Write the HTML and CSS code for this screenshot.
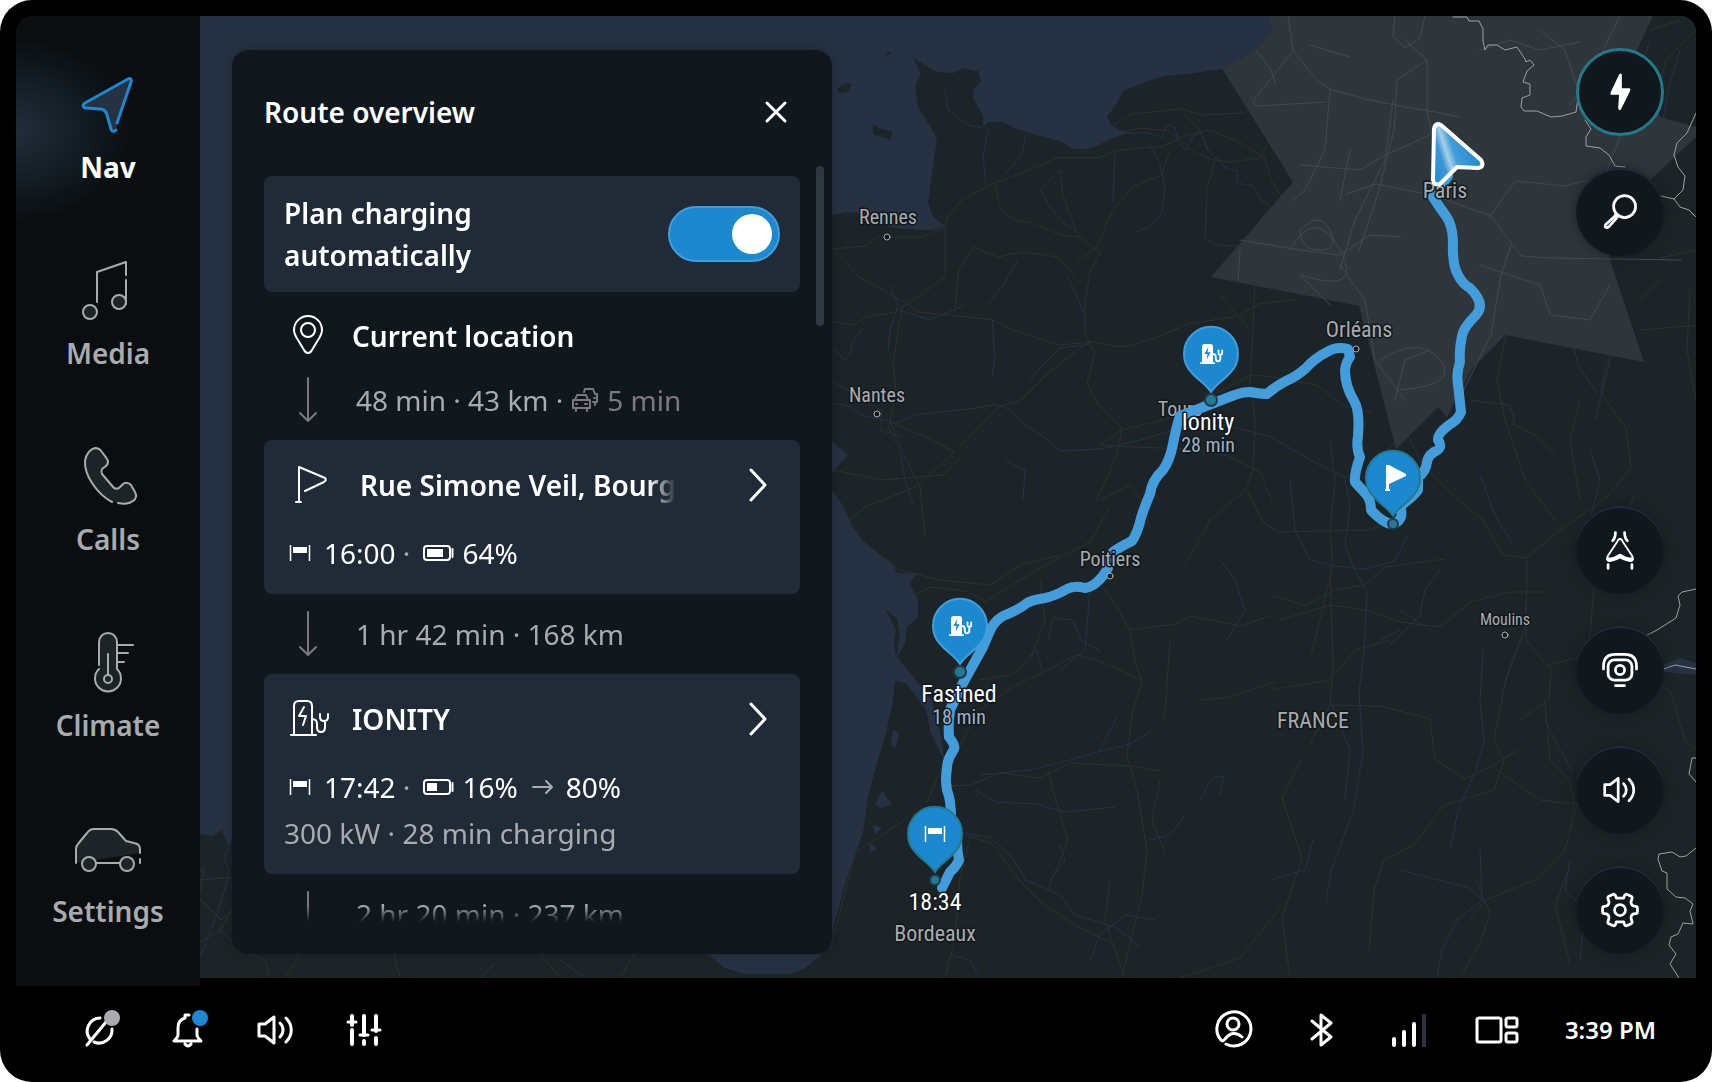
FILE: index.html
```html
<!DOCTYPE html>
<html lang="en">
<head>
  <meta charset="UTF-8" />
  <meta name="viewport" content="width=device-width, initial-scale=1.0"/>
  <title>Route overview</title>
  <link rel="stylesheet" href="styles.css">
</head>
<body>

  <!-- shared icons -->
  <svg class="sprite" aria-hidden="true">
    <symbol id="arrow-down" viewBox="0 0 48 48">
      <path d="M24 2v43M16 37l8 8 8-8"/>
    </symbol>
    <symbol id="finish" viewBox="0 0 36 32">
      <path d="M6.500 8v16M25.500 8v16" fill="none" stroke="#fff" stroke-width="1.500" stroke-linecap="butt"/>
      <path d="M9 10h14v6H9z" fill="#fff" stroke="none"/>
    </symbol>
    <symbol id="chevron" viewBox="0 0 40 40">
      <path d="M11 5l14 15-14 15"/>
    </symbol>
    <symbol id="volume" viewBox="0 0 40 40">
      <path d="M3 14h6l9-7v26l-9-7H3z"/>
      <path d="M24 13c4 4 4 10 0 14M30 8c7 7 7 17 0 24"/>
    </symbol>
    <symbol id="charger-solid" viewBox="0 0 28 24">
      <path d="M2 21V4q0-3 3-3h6q3 0 3 3v17h2v2H0v-2zM9 4L4.500 12H8l-1 6 4.500-8H8z" fill="#fff" fill-rule="evenodd" stroke="none"/>
      <path d="M14 12q3 0 3 3v2q0 3 2.500 3t2.500-3v-4M20 8v3q0 2 2 2t2-2V8" fill="none" stroke="#fff" stroke-width="2"/>
    </symbol>
  </svg>

  <div class="screen">
    <div class="main">

      <nav class="sidebar">
        <button class="nav-item active">
          <svg viewBox="0 0 64 64"><path d="M41 51L55 10c1-3-1-4-3-3L9 31c-3 2-2 5 1 5l14 1c4 0 6 2 7 6l4 14c1 3 3 3 5 1"/></svg>
          <span>Nav</span>
        </button>
        <button class="nav-item">
          <svg viewBox="0 0 64 64"><path class="line" d="M21 44V14L50 4v13M50 22v24"/><circle cx="14" cy="54" r="7"/><circle cx="43" cy="44" r="7"/></svg>
          <span>Media</span>
        </button>
        <button class="nav-item">
          <svg viewBox="0 0 64 64"><path d="M36 58C21 50 8 31 9 17c1-8 6-12 10-13 3 0 5 1 7 4l5 7c2 3 1 5-1 7l-4 3c-1 2-1 3 0 5l12 14c2 1 3 1 5 0l4-4c3-2 6-1 8 1l4 7c2 4 1 7-2 9-4 3-10 3-15 2"/></svg>
          <span>Calls</span>
        </button>
        <button class="nav-item">
          <svg viewBox="0 0 64 64"><path d="M23 35V12a9 9 0 0 1 18 0v27a13 13 0 1 1-18 0"/><circle cx="32" cy="49" r="4"/><path class="line" d="M32 45V24M41 15h16M41 23h11M41 32h7"/></svg>
          <span>Climate</span>
        </button>
        <button class="nav-item">
          <svg viewBox="0 0 64 64"><path d="M0 47V33q0-3 2-5l9-11q3-4 7-4h17q4 0 7 3l8 9 8 2q6 1 6 6v4"/><path class="line" d="M64 43v4M20 47h24"/><circle cx="13" cy="48" r="7"/><circle cx="51" cy="48" r="7"/></svg>
          <span>Settings</span>
        </button>
      </nav>

      <main class="map">
        <svg class="map-canvas" viewBox="200 16 1496 962" preserveAspectRatio="xMidYMid slice">
          <defs>
            <clipPath id="land-clip">
              <path id="land" d="M1270 16l1 17-15 17-34 19-35 5-24 2-23 8-17 7-6 12-10 14 5 9 15 7-14 5-16 8-10 3h-14l-13-8-27-7-16-5-14-7h-15l-5 5v-12l-10-17v-8l8-8-3-11-15-3-10 5-16-1-24-14 8 16-6 12 3 21 12 19 7 13-4 26-5 38 5 14 12 9-12 4-33-1-20-5-23-11-10-1-14 3L700 215V440L833 442 848 455 833 472 760 482 833 491 843 506 853 527l9 13 18 15 13 10 4 8h20l-7 10 8 17v17l-11 10-2 16-8 14 22 27 13 16 8 31 5 32-14-30-5-23-20-27-11-2-2 19-7 33-8 27-10 36-5 37-17 47L833 930 820 956 805 968 790 974H745L725 968 708 955 540 905 240 840 232 838 228 845 222 830 212 836 200 834V978H1696V16z"/>
            </clipPath>
            <linearGradient id="cursor-fill" x1="0" y1="1" x2="1" y2="0.600">
              <stop offset="0" stop-color="#1b88d0"/>
              <stop offset="0.300" stop-color="#3b97d8"/>
              <stop offset="0.420" stop-color="#a9cfe9"/>
              <stop offset="0.550" stop-color="#439ddb"/>
              <stop offset="1" stop-color="#1b88d0"/>
            </linearGradient>
          </defs>

          <rect class="sea" x="200" y="16" width="1496" height="962"/>
          <use href="#land" class="land"/>
          <path class="land" d="M873 125l8 4 12 2-3 9-17-6zM837 89l8-6 7 1-4 8-9 1zM885 54l6-3-2 4zM885 608l12 11 3 17-4 21-2-14 2-13z"/>
          <path class="sea" d="M893 730l6 3-3 15-5-3zM875 805l7-15 10 15-12 3zM873 825l9 3-7 7zM870 843l8 6-8 3zM1664 664l16-6 16 5v12l-32-3z"/>

          <!-- rivers -->
          <g class="river">
            <path d="M833 403l16 3 12 9 35 8 20-8 60-7 20-4 15 6 12 14 20 12 18 15 40-2 40-9 35-11 50-4 45 12 43 25 30 15 25-1 30-40"/>
            <path d="M945 90l3 20 20 15 15 3M988 130l-5 25 3 30M1025 137l-3 18-18 20M1060 170l-20 20 12 20 12 13 12 8"/>
            <path d="M1127 133h20l15 4 5-12 8 2 3 15 8 8 8-15 8-2 4 15 20 20 12 3-1 12 16 3 8 14 20 12-10 20 20 10"/>
            <path d="M1150 145l10 20 5 22-3 25-12 15-15 5M1115 152l-2 50M1018 260l-15 25-15 20M1068 277l8 18 10 22-2 10M992 318l3 40-3 20M1030 380l10-12 20-20 30-4"/>
            <path d="M833 348l12 12 5-6 3-12 8-12M890 285l8 20-8 25-2 20M900 310l30 10 35-15M890 430l10 20 5 30 8 25M1005 460l20 10-2 30"/>
            <path d="M1220 560l15 20 10 30-18 30M1090 590l-5 60-25 20M1048 640l5-22 20 2 8 20 20 12M1025 660l12-10 5 20"/>
            <path d="M980 775l50-5 40-10 20-6 40-10 20-12M975 790l20 12 40 2 30 8 50-5M955 832l35 5 20 18 10 15 5 10 35 15 15 20 40 12 25 20"/>
            <path d="M1100 750l10-20 8-15M1200 800l12-22 12-2-5 20M1150 840l20-5 15-20M1050 880l15-20-5-15M1090 960l10-25 25-20 30 5M950 955l20 5 10 18"/>
            <path d="M1345 480l5 25-5 40 10 25 12 22-3 60-5 40 4 60-10 60-8 20-14 40-5 30"/>
            <path d="M1290 480l5 50 15 30 25 6 30 3 30-8 12-25M1440 570l-15 20-5 25-30 30M1590 450l10 30-10 40M1480 475l15 40 18 30"/>
            <path d="M1450 850l8-40 18-40 8-30-4-40 3-50M1480 850l2 50-25 20-15 30-5 28M1525 605l3 20-15 35-12 35M1545 720l15 30 12 20"/>
            <path d="M1570 860l-5 30 20 20-5 50M1400 870l30 8 40 10 15 15M1330 700l20 50-5 50M1270 880l35-10 8-30M1650 40l-10 30 10 30M1680 50l-12 40-5 30"/>
            <path d="M232 838l-8 20 5 14-5 20-10 30-14 35M200 870l12 10M480 978l15-15M560 960l25 18"/>
            <path d="M1600 320l10 40-15 60M1545 300l25 30 8 35 20 30M1500 400l15 15-3 10M1380 640l20-10M1400 610l30 20"/>
          </g>

          <!-- roads -->
          <g class="road">
            <path d="M833 249l33-3 12-9h45l22-10 2-9 15-18 30-16 30-11 35-15h40l22-8 45-4 20-10 25-6 30 12 25 15 8 25 22 35 25 12M833 249l25 27 35 20 15 8 10 8 50 5 25 3 20 10 45 15 35-3 30 5 30-8 35-15 50-8 20-12 40-5"/>
            <path d="M945 227v50l-20 15-30 20-30 5-10 8-22-3M903 305l-5 25-5 35 3 25-8 40M1060 170l3 25 5 15 10 25 22 18-10 20-5 30v30l10 20-8 30 10 20 25 25-5 25-12 30-10 20"/>
            <path d="M1112 126l20-12 50-5 20 6 40-2 20-6M1120 133l20-5 30 3 22 20 18 8 20 3 30-4 10-20M1215 159l-8 30-2 50 12 6 40 2 60-2"/>
            <path d="M1170 150l-8 25-30 12-20 25-15 35-20 15M1185 115l15 15 8 20M995 185l6 25 15 10 15 3 30 12 20 2M832 381l50 30-1 20 20 5"/>
            <path d="M890 422l35 15 30 15-40 35-50 20-30 25M960 446l15-15 25-25 20-5 30-30 40-30M890 422l15 35 15 30 5 50M955 312l3-40 15-25 25 10 25-5 35 5 18 20"/>
            <path d="M1100 445l35 2 50 2 40 6 35 17 12 30M1100 445l22-15 60-15 30-20 40-20 20 2 45 8 25 20 30 8M1100 500l30-15 15 20 5 25"/>
            <path d="M1255 280l-2 50-3 50 5 40-2 50-8 20-35 30-25 45M1220 295l30 35M1330 440l5 40-5 50 3 35-12 50-10 40M1248 492l15 30 15 10 90-2 20-5 20-20 15-20"/>
            <path d="M833 470l50 10 60-5 20-20M860 540l40 30 40 10 50 5 30-20 40-10M915 595l15-8 40 5 15 10 40-25 45-25 20-10 20-35"/>
            <path d="M1100 582l20 30 10 18 45-6 15-8 50 10 30-10M1130 630l6 35 6 15-10 35-5 40 10 35 10 60-5 45-15 60-5 25"/>
            <path d="M1142 680l-45-20-20-5-40 20-25 12-35 25-20 40-15 15-15 35M950 786l20-1 30-12 40 5 30-15 60 3 30 5M980 680l30-5 20-15 15-40-5-40"/>
            <path d="M955 835l-40-22-60 40-15 60-10 35M968 836l25 8 25 35 25 25 30 20 40 20 10 30M1048 890l20-50-15-50-5-20M945 978l10-40 5-60 10-40"/>
            <path d="M1200 700l30-3 45-15M1160 780l-8 40 12 30M1170 640l-4 60-3 20M1110 880l-5 40 8 25M1270 690l60-10 25-30 35-10M1280 620l50-15 35 5 35 12 40 5 30-25 40-10h35"/>
            <path d="M1270 595l35 10 30-15 30-5 20-18 60-8M1330 565l3 100-3 40-20 40M1330 705l50 1 50 13 5 40 30 20 30-15 25-15M1490 765l50 35 45 5M1527 620l-20 55-8 40-5 25 10 20-10 30-50 15-30 40-30 15-10 30-5 60"/>
            <path d="M1527 560l-1 80 25 30-2 30-30 20M1549 665l30-8 10-10 5-60 20-50 20-40M1545 700l5 60 20 20 5 30-10 40-30 30-50 20-15 20M1526 558l30-25 50-35 25-30-5-40-25-35 5-30 20-20M1580 400l-10 40 10 60"/>
            <path d="M1393 405l30 60 30 30 30 25 20 35 25 3M1555 520l-30-40-20-60-8-40 10-50M1470 400l40 5 5 20 20 10 20 20M1640 330l60-5M1690 290l-3 60 9 50M1400 380l30-30 20-40"/>
            <path d="M1570 865l-15 40 15 60M1460 978l20-35 10-30-15-35M1620 700l5-40 20 20 25 10 15 50 11 10M1290 978l-8-60 20-60-20-60 20-40M1180 978l60-20 40-50"/>
            <path d="M200 880l35-3M204 868l-5 30 22 22 11-10-12 20-20 12M220 930l20 20 25 10 5 18M400 978l-10-40M620 978l15-25M300 955l-15 23M560 978l-20-25"/>
            <path d="M1650 30l30-10M1696 30l-30 30-10 40M1660 258l36-8M1640 300l20-20"/>
          </g>

          <!-- reachable area -->
          <g clip-path="url(#land-clip)">
            <path class="reach" d="M1189 16l104 166-82 95 148 29 37 143 42-42 9 10 24-47 34-35 139 27-35-105 41-77 46-43v-10l-36-10-23-67 16-34z"/>
            <g class="reach-road">
              <path d="M1288 16l5 35 25 30 12 8 35 10 40 8 30 5 25 5M1293 51l-20 25-20 25 3 5 70-4M1256 50l15 20 5 15M1310 45l40 12M1395 16l-2 20 12 12 15-10 5-22M1405 40l22 20v50l5 25M1427 60l-30 20-3 50-15 60-20 60"/>
              <path d="M1330 90l-5 60-20 40-12 10M1300 165l60 5 25-15 45-20M1393 100l-8 60-30 60-15 50M1436 196l55 20 30 40 30 2 130 2M1490 216l25-35 50 5 40-10 15-40M1436 196l-60-12-30 10M1511 245l-10 30-10 60-30 60"/>
              <path d="M1300 230q20-20 30 0t-10 20-20-20M1290 250q25-45 50 0t-40 25l30 30M1240 240l60 10 40 5 30-20 30 2M1240 250l-2 30M1340 265l25 35 10 60 30 40M1380 360q40-25 60 0t-40 30M1480 265l60 20 10 30 40 5 20-35M1540 30l25 20 20 60M1480 50l30-10 30 10 40-8M1620 16l-30 60-20 30M1350 150l-10 50M1430 350l-25 10-10 40"/>
            </g>
          </g>

          <!-- country borders -->
          <path class="border" d="M1453 17h14l2 4h10l4 8v12l2 9 3-5h9l8 5 12-3 8 12 1 3 4-2 4 5-7 6-4 11 7 2v11l-8 3-1 9 3 4h13l14 6 11-1 14-4 2-14M1585 120l6 9-5 8v9l14 2 9 7 6 11 10 1M1696 113l-9 20-10 10-3 12 4 12 7 9-2 14-9 9-13-3M1674 199l6 8 9 3 7 7M1696 589l-14 3-4 4 2 9-4 13-19 12-10 5M1664 669l11-4 21 4M1696 758h-4l-3 16 7 8M1696 848l-10 8-6 1-8-5-13 2-1 5 4 12 5 2v16l9 8 9 1 8 6-3 7 3 13-10-1-5 11-7 3-2 8 7 9-6 10 9 14"/>

          <!-- city labels -->
          <g class="city">
            <circle cx="887" cy="237" r="3"/><text x="888" y="224">Rennes</text>
            <circle cx="877" cy="414" r="3"/><text x="877" y="402">Nantes</text>
            <circle cx="1356" cy="349" r="3"/><text class="large" x="1359" y="337">Orléans</text>
            <text x="1180" y="416">Tours</text>
            <circle cx="1505" cy="635" r="3"/><text class="small" x="1505" y="625">Moulins</text>
            <text class="large" x="935" y="941">Bordeaux</text>
            <text class="large" x="1313" y="728">FRANCE</text>
          </g>

          <path class="route" d="M1448 176L1433 197Q1440 208 1446 216T1453 240Q1452 262 1457 273T1470 288Q1486 304 1476 315Q1463 328 1462 336Q1459 350 1460 362Q1456 374 1458 384L1461 412Q1458 420 1449 425Q1437 434 1438 440Q1444 448 1434 452Q1428 456 1427 462Q1426 472 1418 477L1418 490Q1412 498 1400 506 1405 520 1393 524 1384 524 1371 510 1371 500 1366 494L1355 482Q1354 474 1360 457 1356 448 1358 436 1360 410 1354 401 1345 386 1345 370 1346 362 1350 357L1348 349Q1336 346 1327 352 1315 358 1306 368 1296 377 1286 381 1276 386 1267 394 1262 394 1250 392 1242 392 1232 396L1201 408 1180 416Q1176 428 1173 444 1170 460 1163 470 1152 480 1150 494 1144 508 1141 518 1138 532 1132 541 1118 548 1113 552 1109 558 1108 568 1103 577 1097 582 1092 587 1085 588 1074 585 1067 589 1055 596 1045 598 1032 600 1027 603 1020 609 1003 616 993 622 989 633L983 647 963 683 950 710Q948 724 949 737 957 747 953 751 947 760 947 768 945 780 947 790 951 800 951 817L957 840Q957 850 959 860 956 867 950 872 946 880 942 888"/>

          <g class="city">
            <text class="large" x="1445" y="198">Paris</text>
            <circle cx="1110" cy="576" r="3"/><text x="1110" y="566">Poitiers</text>
          </g>

          <!-- charging stops and destinations -->
          <g class="pin light" transform="translate(1211 354)">
            <circle class="dot" cy="46" r="6"/>
            <path d="M0 38C-5 30-13 26-19 19A27 27 0 1 1 19 19C13 26 5 30 0 38z"/>
            <use href="#charger-solid" x="-11" y="-11" width="26" height="22"/>
          </g>
          <g class="pin light" transform="translate(960 626)">
            <circle class="dot" cy="46" r="6"/>
            <path d="M0 38C-5 30-13 26-19 19A27 27 0 1 1 19 19C13 26 5 30 0 38z"/>
            <use href="#charger-solid" x="-11" y="-11" width="26" height="22"/>
          </g>
          <g class="pin" transform="translate(1393 478)">
            <circle class="dot" cy="46" r="5"/>
            <path d="M0 38C-5 30-13 26-19 19A27 27 0 1 1 19 19C13 26 5 30 0 38z"/>
            <path class="glyph" d="M-7-13h3l17 9v2L-4 6v5h1v2h-5v-2h1z"/>
          </g>
          <g class="pin" transform="translate(935 834)">
            <circle class="dot" cy="46" r="5"/>
            <path d="M0 38C-5 30-13 26-19 19A27 27 0 1 1 19 19C13 26 5 30 0 38z"/>
            <use href="#finish" x="-16" y="-16" width="36" height="32"/>
          </g>

          <g class="stop">
            <text x="1208" y="430">Ionity</text><text class="time" x="1208" y="452">28 min</text>
            <text x="959" y="702">Fastned</text><text class="time" x="959" y="724">18 min</text>
            <text x="935" y="910">18:34</text>
          </g>

          <path class="cursor" d="M1434 129q1-7 7-4l40 35q4 7-3 8l-21-1-17 17q-6 2-7-4z"/>
        </svg>

        <section class="panel">
          <header class="panel-header">
            <h1>Route overview</h1>
            <button class="close" aria-label="Close">
              <svg viewBox="0 0 32 32"><path d="M7 7l18 18M25 7L7 25"/></svg>
            </button>
          </header>

          <div class="panel-body">
            <div class="stops">
              <div class="card auto-charge">
                <label for="auto-charge">Plan charging<br>automatically</label>
                <input type="checkbox" id="auto-charge" class="toggle" checked>
              </div>

              <div class="location">
                <svg class="stop-icon" viewBox="0 0 48 48"><path d="M24 41c-2 0-3-1-4-3l-6-10c-2-3-4-6-4-10a14 14 0 0 1 28 0c0 4-2 7-4 10l-6 10c-1 2-2 3-4 3z"/><circle cx="24" cy="18" r="7"/></svg>
                <h2>Current location</h2>
              </div>

              <div class="leg">
                <svg class="leg-icon"><use href="#arrow-down"/></svg>
                <p>48 min · 43 km ·
                  <svg class="traffic" viewBox="0 0 28 28"><path d="M4 14l2-5h9l2 5M2 14h17v8H2zM5 22v3M16 22v3M5 18h1M14 18h2M13 6l1-3h8l2 5h2v8h-4M24 16v3M23 12h1"/></svg>
                  <span class="delay">5 min</span></p>
              </div>

              <article class="card">
                <div class="card-title flag">
                  <svg class="stop-icon" viewBox="0 0 48 48"><path d="M15 41V6l26 11q2 2-1 4l-19 9M12 41h5"/></svg>
                  <h2 class="fade">Rue Simone Veil, Bourg</h2>
                  <button class="more" aria-label="Rue Simone Veil"><svg><use href="#chevron"/></svg></button>
                </div>
                <div class="meta">
                  <svg class="finish"><use href="#finish"/></svg>
                  <span>16:00 <i>·</i></span>
                  <svg class="battery" viewBox="0 0 44 32"><rect x="10" y="9" width="26" height="14" rx="3"/><path d="M38.500 12v8"/><path class="level" d="M13 12h16v8H13z"/></svg>
                  <span>64%</span>
                </div>
              </article>

              <div class="leg">
                <svg class="leg-icon"><use href="#arrow-down"/></svg>
                <p>1 hr 42 min · 168 km</p>
              </div>

              <article class="card">
                <div class="card-title">
                  <svg class="stop-icon" viewBox="0 0 48 48"><path d="M10 39V11q0-5 5-5h8q5 0 5 5v28M7 40h25M20 12l-5 9h7l-3 9M28 24q5 0 5 5v3q0 5 4 5t4-5v-6M36 19v3q0 4 4 4t4-4v-3"/></svg>
                  <h2>IONITY</h2>
                  <button class="more" aria-label="IONITY"><svg><use href="#chevron"/></svg></button>
                </div>
                <div class="meta">
                  <svg class="finish"><use href="#finish"/></svg>
                  <span>17:42 <i>·</i></span>
                  <svg class="battery" viewBox="0 0 44 32"><rect x="10" y="9" width="26" height="14" rx="3"/><path d="M38.500 12v8"/><path class="level" d="M13 12h10v8H13z"/></svg>
                  <span>16%</span>
                  <svg class="to" viewBox="0 0 40 32"><path d="M11 16h19M24 10l6 6-6 6"/></svg>
                  <span>80%</span>
                </div>
                <p class="charging">300 kW · 28 min charging</p>
              </article>

              <div class="leg">
                <svg class="leg-icon"><use href="#arrow-down"/></svg>
                <p>2 hr 20 min · 237 km</p>
              </div>
            </div>
            <div class="scroll-thumb"></div>
          </div>
        </section>

        <div class="controls">
          <div class="control-group">
            <button class="control charge" aria-label="Charging">
              <svg viewBox="0 0 48 48"><path d="M23 5q3-3 3 1v14h8q2 0 1 3L25 43q-2 2-3-1l1-15h-9q-1-1 0-3z" fill="#fff" stroke="none"/></svg>
            </button>
            <button class="control" aria-label="Search">
              <svg viewBox="0 0 48 48"><circle cx="29" cy="18" r="12"/><path d="M20 26l-2 3-9 8q-3 4 1 4l2-1 7-8 3-4z"/></svg>
            </button>
          </div>
          <div class="control-group">
            <button class="control" aria-label="3D view">
              <svg viewBox="0 0 48 48"><path d="M24 12q2 0 3 3l10 15q3 5-1 6-4 0-12-4-8 4-12 4-4-1-1-6l10-15q1-3 3-3z" stroke-width="2"/><path d="M12 34q4 1 12-4 8 5 12 4" stroke-width="4"/><path d="M19 5q0 6-3 9M29 5q0 6 3 9M11 40v4M37 40v4"/></svg>
            </button>
            <button class="control" aria-label="Dashcam">
              <svg viewBox="0 0 48 48"><rect x="11" y="13" width="26" height="22" rx="7"/><circle cx="24" cy="24" r="5"/><path d="M6 23v-3Q6 7 19 7h10q13 0 13 13v3M19 41h10"/></svg>
            </button>
            <button class="control" aria-label="Guidance volume">
              <svg class="volume"><use href="#volume"/></svg>
            </button>
            <button class="control" aria-label="Map settings">
              <svg viewBox="0 0 48 48"><circle cx="24" cy="24" r="6"/><path d="M20 11l-1-3q-1-2-3-1l-4 2q-2 1-1 3l1 3q0 5-5 5-2 0-2 2v4q0 2 2 2 5 0 5 5l-1 3q-1 2 1 3l4 2q2 1 3-1l1-3h8l1 3q1 2 3 1l4-2q2-1 1-3l-1-3q0-5 5-5 2 0 2-2v-4q0-2-2-2-5 0-5-5l1-3q1-2-1-3l-4-2q-2-1-3 1l-1 3z"/></svg>
            </button>
          </div>
        </div>
      </main>
    </div>

    <footer class="statusbar">
      <div class="status-group">
        <button class="status" aria-label="Sharing off">
          <svg viewBox="0 0 40 40"><path d="M20 8A13 13 0 0 0 10 29M14 32a13 13 0 0 0 18-13M7 35l19-23"/></svg>
          <span class="badge"></span>
        </button>
        <button class="status" aria-label="Notifications">
          <svg viewBox="0 0 40 40"><path d="M21 5h-4v3q-7 2-7 10v7q0 2-4 6h27q-4-4-4-6v-6M17 34q3 4 6 0"/></svg>
          <span class="badge blue"></span>
        </button>
        <button class="status" aria-label="Volume"><svg><use href="#volume"/></svg></button>
        <button class="status" aria-label="Equalizer">
          <svg viewBox="0 0 40 40"><path stroke-width="4" d="M8 6v9M8 20v14M20 6v19M20 31v3M32 6v15M32 28v6"/><path d="M4 12h8M16 25h8M28 20h8"/></svg>
        </button>
      </div>
      <div class="status-group">
        <button class="status" aria-label="Profile">
          <svg viewBox="0 0 40 40"><path d="M13 34a17 17 0 1 0-5-4q2 2 4-1 8-10 17-2"/><circle cx="20" cy="14" r="6"/></svg>
        </button>
        <button class="status" aria-label="Bluetooth">
          <svg viewBox="0 0 40 40"><path d="M11 11l19 16-10 8V5l10 8-19 16"/></svg>
        </button>
        <button class="status" aria-label="Signal">
          <svg viewBox="0 0 40 40"><path stroke-width="4" d="M5 29v6M15 22v13M25 14v21"/><path stroke-width="4" stroke="#2a3441" stroke-linecap="butt" d="M35 4v33"/></svg>
        </button>
        <button class="status" aria-label="Layout">
          <svg viewBox="0 0 40 40"><rect x="0" y="8" width="24" height="24" rx="2"/><rect x="29" y="8" width="11" height="9" rx="2"/><rect x="29" y="23" width="11" height="9" rx="2"/></svg>
        </button>
        <time>3:39 PM</time>
      </div>
    </footer>
  </div>

</body>
</html>
```
FILE: styles.css
```css
* {
  margin: 0;
  padding: 0;
  box-sizing: border-box;
}

body {
  background: #fff;
  color: #fff;
  font-family: 'Noto Sans', 'Open Sans', sans-serif;
  font-size: 28px;
  line-height: 42px;
}

button {
  background: none;
  border: none;
  color: inherit;
  font: inherit;
  cursor: pointer;
}

svg {
  display: block;
  flex-shrink: 0;
  overflow: visible;
  fill: none;
  stroke: #fff;
  stroke-width: 3;
  stroke-linecap: round;
  stroke-linejoin: round;
}

h1, h2 {
  font-size: 28px;
  font-weight: 600;
}

.sprite {
  position: absolute;
  width: 0;
  height: 0;
}

.screen {
  display: flex;
  flex-direction: column;
  height: 100vh;
  background: #000;
  border-radius: 32px;
  overflow: hidden;
}

.main {
  display: flex;
  flex: 1;
  min-height: 0;
  padding: 16px 16px 0;
}

/* Sidebar */

.sidebar {
  display: flex;
  flex-direction: column;
  gap: 70px;
  width: 184px;
  padding-top: 56px;
  border-top-left-radius: 16px;
  background: radial-gradient(ellipse 116px 92px at 0 114px, #212d3b, #111a20 65%, #0a0e11);
}

.nav-item {
  display: flex;
  flex-direction: column;
  align-items: center;
  gap: 10px;
  color: #a9abae;
  font-weight: 600;
}

.nav-item svg {
  width: 64px;
  height: 64px;
  fill: #1c2427;
  stroke: #a9abae;
  stroke-width: 2;
}

.nav-item .line {
  fill: none;
}

.nav-item.active {
  color: #fff;
  font-weight: 700;
}

.nav-item.active svg {
  fill: #263142;
  stroke: #1b88d0;
  stroke-width: 3;
}

/* Map */

.map {
  position: relative;
  display: flex;
  justify-content: space-between;
  flex: 1;
  margin-bottom: 8px;
  padding: 32px 32px 24px;
  border-top-right-radius: 16px;
  overflow: hidden;
}

.map-canvas {
  position: absolute;
  inset: 0;
  width: 100%;
  height: 100%;
  stroke: none;
}

.sea {
  fill: #263244;
}

.land {
  fill: #1c2427;
}

.river, .road, .reach-road, .border {
  fill: none;
  stroke-width: 1;
}

.river {
  stroke: #24324c;
}

.road {
  stroke: #312f30;
}

.reach {
  fill: #2e363c;
}

.reach-road {
  stroke: #414a51;
}

.border {
  stroke: #a0a0a2;
}

.route {
  fill: none;
  stroke: #439ddb;
  stroke-width: 10;
}

.city, .stop {
  font-family: 'Roboto Condensed', 'Liberation Sans Narrow', 'Open Sans Condensed', 'Noto Sans', sans-serif;
  font-size: 20px;
  text-anchor: middle;
  fill: #a9abae;
}

.city text, .stop text {
  paint-order: stroke;
  stroke: #11181d;
  stroke-width: 3;
}

.city circle {
  fill: #11181d;
  stroke: #a9abae;
  stroke-width: 1;
}

.city .large {
  font-size: 22px;
}

.city .small {
  font-size: 16px;
}

.stop {
  font-size: 24px;
  fill: #fff;
}

.stop .time {
  font-size: 20px;
  fill: #9fb3c3;
}

.pin path {
  fill: #1b88d0;
  stroke: #237a8c;
  stroke-width: 2;
}

.pin.light path {
  stroke: #439ddb;
}

.pin .glyph {
  fill: #fff;
  stroke: none;
}

.pin .dot {
  fill: #237a8c;
  stroke: #1d3a55;
  stroke-width: 2;
}

.cursor {
  fill: url(#cursor-fill);
  stroke: #fff;
  stroke-width: 4;
}

/* Route panel */

.panel {
  position: relative;
  display: flex;
  flex-direction: column;
  width: 600px;
  margin-top: 2px;
  border-radius: 16px;
  background: #11181d;
  box-shadow: 0 0 8px rgba(17, 24, 29, 0.5);
}

.panel-header {
  display: flex;
  justify-content: space-between;
  align-items: center;
  padding: 41px 40px 33px 32px;
}

.close svg {
  width: 32px;
  height: 32px;
}

.panel-body {
  display: flex;
  flex: 1;
  gap: 16px;
  min-height: 0;
  margin-bottom: 32px;
  padding: 0 8px 0 32px;
  overflow: hidden;
}

.stops {
  flex: 1;
  min-width: 0;
  padding-top: 10px;
  overflow: hidden;
  -webkit-mask-image: linear-gradient(#000 calc(100% - 16px), transparent);
  mask-image: linear-gradient(#000 calc(100% - 16px), transparent);
}

.scroll-thumb {
  width: 8px;
  height: 160px;
  border-radius: 4px;
  background: #2f3740;
}

.card {
  padding: 24px 20px 18px;
  border-radius: 8px;
  background: #212b37;
}

.auto-charge {
  display: flex;
  justify-content: space-between;
  align-items: center;
  padding: 16px 20px;
  font-weight: 600;
}

.toggle {
  appearance: none;
  display: flex;
  align-items: center;
  width: 112px;
  height: 56px;
  padding: 0 6px;
  border: 2px solid #439ddb;
  border-radius: 28px;
  background: #1b88d0;
  cursor: pointer;
}

.toggle::before {
  content: "";
  width: 40px;
  height: 40px;
  border-radius: 50%;
  background: #fff;
}

.toggle:checked {
  justify-content: flex-end;
}

.stop-icon {
  width: 48px;
  height: 48px;
  stroke-width: 2;
}

.location {
  display: flex;
  align-items: center;
  gap: 20px;
  padding: 20px 20px 0;
}

.leg {
  display: flex;
  align-items: center;
  gap: 24px;
  height: 80px;
  padding: 0 20px;
  color: #a9abae;
}

.leg-icon {
  width: 48px;
  height: 48px;
  stroke: #7d787c;
  stroke-width: 2;
}

.leg p {
  display: flex;
  align-items: center;
  gap: 8px;
}

.traffic {
  width: 28px;
  height: 28px;
  stroke: #7d787c;
  stroke-width: 2;
}

.delay {
  color: #7d787c;
}

.card-title {
  display: flex;
  align-items: center;
  gap: 20px;
  height: 42px;
  margin-bottom: 24px;
}

.card-title.flag {
  gap: 28px;
}

.fade {
  -webkit-mask-image: linear-gradient(90deg, #000 calc(100% - 28px), transparent);
  mask-image: linear-gradient(90deg, #000 calc(100% - 28px), transparent);
}

.more {
  margin-left: auto;
}

.more svg {
  width: 40px;
  height: 40px;
}

.meta {
  display: flex;
  align-items: center;
  gap: 4px;
  line-height: 46px;
}

.meta i {
  color: #a9abae;
  font-style: normal;
}

.finish {
  width: 36px;
  height: 32px;
}

.battery {
  width: 44px;
  height: 32px;
  stroke-width: 2;
}

.battery .level {
  fill: #fff;
  stroke: none;
}

.to {
  width: 40px;
  height: 32px;
  stroke: #a9abae;
  stroke-width: 2;
}

.charging {
  color: #a9abae;
  line-height: 46px;
}

/* Map controls */

.controls {
  position: relative;
  display: flex;
  flex-direction: column;
  justify-content: space-between;
}

.control-group {
  display: flex;
  flex-direction: column;
  gap: 32px;
}

.control {
  display: flex;
  justify-content: center;
  align-items: center;
  width: 88px;
  height: 88px;
  border-radius: 50%;
  background: #11181d;
  box-shadow: 0 0 12px rgba(17, 24, 29, 0.6), inset 0 2px 0 #202c3b;
}

.control svg {
  width: 44px;
  height: 44px;
  stroke-width: 3;
}

.control .volume {
  width: 36px;
  height: 36px;
}

.control.charge {
  border: 3px solid #237a8c;
  box-shadow: none;
}

/* Status bar */

.statusbar {
  display: flex;
  justify-content: space-between;
  align-items: center;
  height: 96px;
  padding: 0 56px 8px 80px;
}

.status-group {
  display: flex;
  align-items: center;
  gap: 48px;
}

.status {
  position: relative;
}

.status svg {
  width: 40px;
  height: 40px;
}

.badge {
  position: absolute;
  top: 0;
  right: 0;
  width: 16px;
  height: 16px;
  border-radius: 50%;
  background: #a9abae;
}

.badge.blue {
  background: #1b88d0;
}

.statusbar time {
  font-size: 24px;
  font-weight: 600;
  line-height: 32px;
}
```
